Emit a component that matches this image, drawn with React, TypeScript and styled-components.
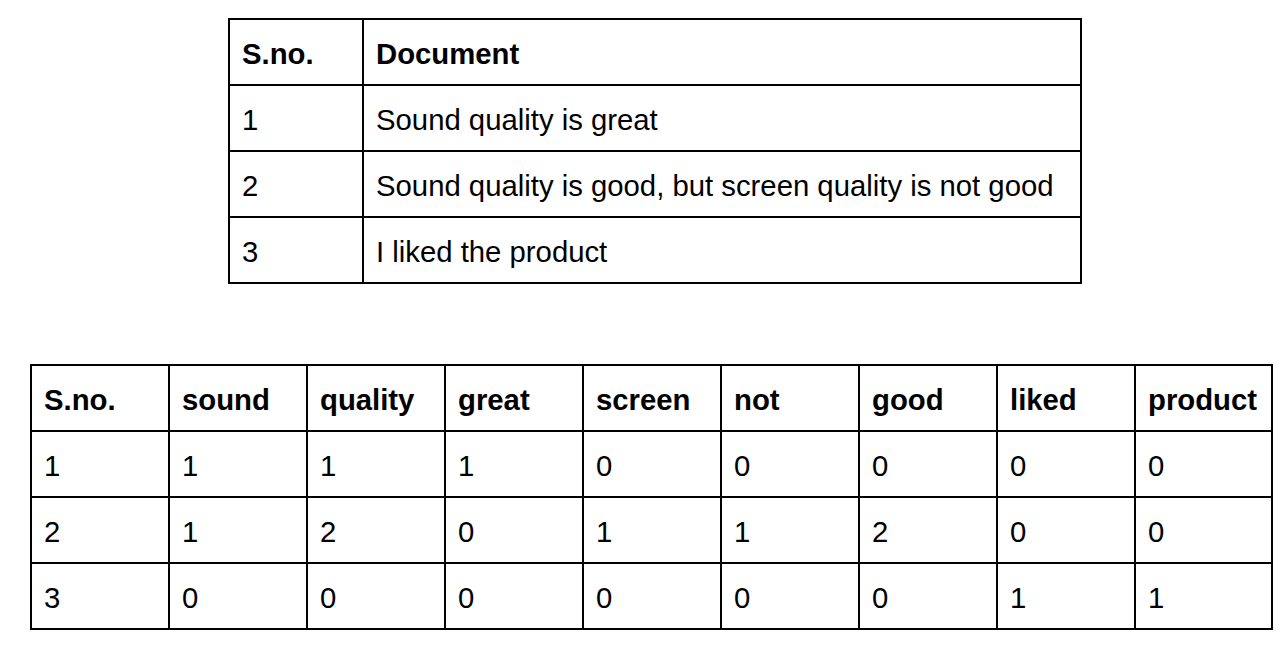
import React from "react";
import styled, { createGlobalStyle } from "styled-components";

const Global = createGlobalStyle`
  html, body { margin: 0; padding: 0; background: #ffffff; }
  body { font-family: "Liberation Sans", Arial, sans-serif; color: #000; }
`;

const Page = styled.div`
  display: flex;
  flex-direction: column;
  align-items: flex-start;
  padding-top: 18px;
  gap: 80px;
`;

const Table = styled.table<{ $left: number; $width: number }>`
  border-collapse: collapse;
  table-layout: fixed;
  margin-left: ${(p) => p.$left}px;
  width: ${(p) => p.$width}px;
  font-size: 29.3px;
`;

const Cell = styled.td<{ $head?: boolean }>`
  border: 2px solid #000;
  height: 60px;
  padding: 4px 12px 0 12px;
  vertical-align: middle;
  font-weight: ${(p) => (p.$head ? 700 : 400)};
  white-space: nowrap;
  line-height: 32px;
`;

const docs = [
  ["1", "Sound quality is great"],
  ["2", "Sound quality is good, but screen quality is not good"],
  ["3", "I liked the product"],
];

const heads = ["S.no.", "sound", "quality", "great", "screen", "not", "good", "liked", "product"];
const rows = [
  ["1", "1", "1", "1", "0", "0", "0", "0", "0"],
  ["2", "1", "2", "0", "1", "1", "2", "0", "0"],
  ["3", "0", "0", "0", "0", "0", "0", "1", "1"],
];

export default function App() {
  return (
    <>
      <Global />
      <Page>
        <Table $left={228} $width={852}>
          <colgroup>
            <col style={{ width: 134 }} />
            <col style={{ width: 718 }} />
          </colgroup>
          <tbody>
            <tr>
              <Cell $head>S.no.</Cell>
              <Cell $head>Document</Cell>
            </tr>
            {docs.map((r) => (
              <tr key={r[0]}>
                <Cell>{r[0]}</Cell>
                <Cell>{r[1]}</Cell>
              </tr>
            ))}
          </tbody>
        </Table>
        <Table $left={30} $width={1241}>
          <colgroup>
            {heads.map((h, i) => (
              <col key={h} style={{ width: i === 8 ? 137 : 138 }} />
            ))}
          </colgroup>
          <tbody>
            <tr>
              {heads.map((h) => (
                <Cell $head key={h}>{h}</Cell>
              ))}
            </tr>
            {rows.map((r) => (
              <tr key={r[0]}>
                {r.map((v, i) => (
                  <Cell key={i}>{v}</Cell>
                ))}
              </tr>
            ))}
          </tbody>
        </Table>
      </Page>
    </>
  );
}
